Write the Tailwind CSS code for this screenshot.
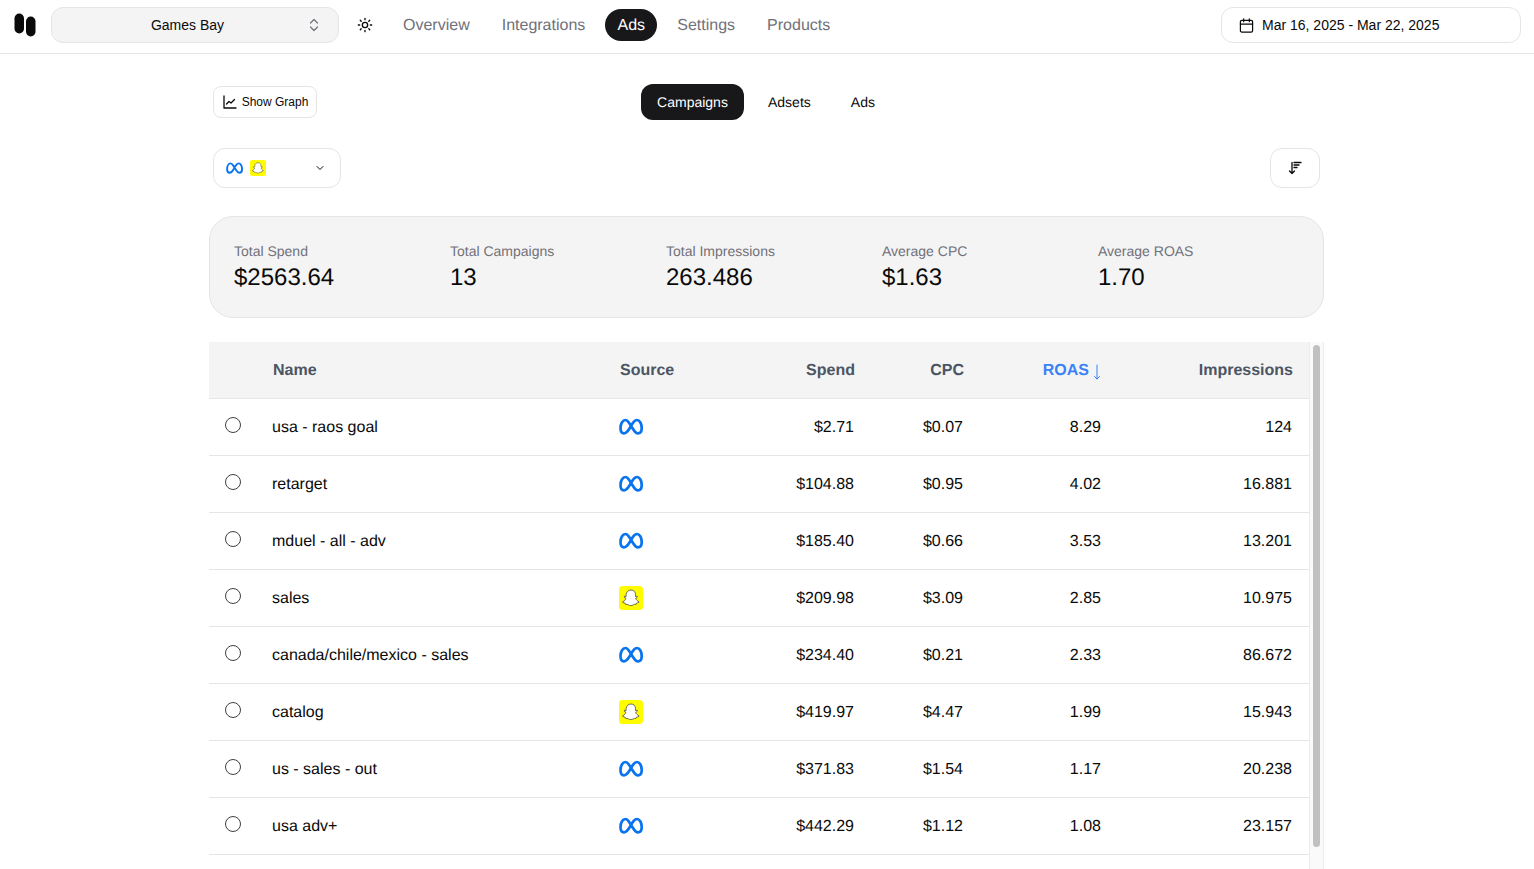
<!DOCTYPE html>
<html lang="en">
<head>
<meta charset="UTF-8">
<title>Ads</title>
<script src="https://cdn.jsdelivr.net/npm/@tailwindcss/browser@4"></script>
</head>
<body class="bg-white h-[869px] overflow-hidden font-['Liberation_Sans',Arial,sans-serif] text-[#0a0a0a] antialiased [text-rendering:geometricPrecision]">
<svg width="0" height="0" class="absolute">
  <defs>
    <symbol id="meta" viewBox="0 0 24 17"><path d="M6.500 2C3.500 2 1.500 6 1.500 10c0 3.500 1.500 5.300 3.500 5.300 2 0 3.500-1.500 5.500-4.800l3-5C15 3.200 16 2 18 2c2.500 0 4.700 3.500 4.700 8 0 3.500-1.400 5.300-3.700 5.300-2 0-3.200-1.300-5-4.300l-3.500-5.500C9 3.200 8 2 6.500 2Z" fill="none" stroke="#0a74ee" stroke-width="2.700" stroke-linejoin="round"/></symbol>
    <symbol id="snap" viewBox="0 0 24 24"><rect width="24" height="24" rx="3.500" fill="#fffc00"/><path d="M12 4c2.800 0 4.500 2 4.500 4.600v1.900l1.600-.3.500.8c-.5.600-1.400.8-1.900 1.100.3 1.500 1.600 3 3.200 3.600l-.1.800c-.7.400-1.600.4-2.300.7l-.4 1.100c-1.100-.1-2.100.1-2.900.6-1.500.9-3.300.9-4.800 0-.8-.5-1.800-.7-2.900-.6l-.4-1.100c-.7-.3-1.600-.3-2.300-.7l-.1-.8c1.600-.6 2.900-2.100 3.200-3.600-.5-.3-1.400-.5-1.900-1.100l.5-.8 1.600.3V8.600C7.500 6 9.200 4 12 4Z" fill="#fff" stroke="#333" stroke-width=".7" stroke-linejoin="round"/></symbol>
  </defs>
</svg>

<header class="h-[54px] border-b border-[#e5e5e5] flex items-center pl-[14px] pr-[13px] pb-[3px]">
  <svg class="w-[22px] h-[24px] mr-[15px]" viewBox="0 0 22 24"><rect x="0.500" y="0.500" width="9.500" height="20" rx="4.750" fill="#0a0a0a"/><rect x="12" y="3.500" width="9.500" height="20" rx="4.750" fill="#0a0a0a"/></svg>
  <button class="w-[288px] h-[36px] rounded-xl bg-[#f4f4f4] border border-[#e5e5e5] flex items-center pr-[17px] text-sm">
    <span class="flex-1 text-center pl-[16px]">Games Bay</span>
    <svg class="w-[14px] h-[16px] text-[#71717a]" viewBox="0 0 14 16" fill="none" stroke="currentColor" stroke-width="1.200" stroke-linecap="round" stroke-linejoin="round"><path d="m3.500 6 3.500-3.500L10.500 6"/><path d="m3.500 10 3.500 3.500 3.500-3.500"/></svg>
  </button>
  <svg class="w-[16px] h-[16px] ml-[18px] mr-[30px]" viewBox="0 0 24 24" fill="none" stroke="#0a0a0a" stroke-width="2" stroke-linecap="round"><circle cx="12" cy="12" r="4"/><path d="M12 2v2M12 20v2M4.900 4.900l1.400 1.400M17.700 17.700l1.400 1.400M2 12h2M20 12h2M6.300 17.700l-1.400 1.400M19.100 4.900l-1.400 1.400"/></svg>
  <nav class="flex items-center text-base text-[#71717a]">
    <a class="mr-[32px] pt-[2px]">Overview</a>
    <a class="mr-[20px] pt-[2px]">Integrations</a>
    <a class="w-[52px] h-[32px] pt-[2px] rounded-full bg-[#18181b] text-white flex items-center justify-center mr-[20px]">Ads</a>
    <a class="mr-[32px] pt-[2px]">Settings</a>
    <a class="pt-[2px]">Products</a>
  </nav>
  <button class="ml-auto w-[300px] h-[36px] rounded-xl border border-[#e5e5e5] flex items-center pl-[17px] gap-[8px] text-sm">
    <svg class="w-[15px] h-[15px]" viewBox="0 0 16 16" fill="none" stroke="#0a0a0a" stroke-width="1.300" stroke-linecap="round"><rect x="1.500" y="2.500" width="13" height="12.500" rx="1.500"/><path d="M1.500 6.500h13M5 1v3M11 1v3"/></svg>
    <span>Mar 16, 2025 - Mar 22, 2025</span>
  </button>
</header>

<main class="w-[1115px] ml-[209px]">
  <div class="relative h-[94px] pl-[4px] pt-[32px]">
    <button class="w-[104px] h-[32px] rounded-lg border border-[#e5e5e5] flex items-center justify-center gap-[5px] text-xs">
      <svg class="w-[14px] h-[14px] ml-px" viewBox="0 0 14 14" fill="none" stroke="#0a0a0a" stroke-width="1.300" stroke-linecap="round" stroke-linejoin="round"><path d="M1 1v12h12"/><path d="m3.500 9 2.500-2.500 2 1.500 3.500-3.500"/></svg>
      Show Graph
    </button>
    <div class="absolute left-[432px] top-[30px] flex items-center text-sm">
      <span class="w-[103px] h-[36px] rounded-xl bg-[#18181b] text-white flex items-center justify-center">Campaigns</span>
      <span class="ml-[24px]">Adsets</span>
      <span class="ml-[40px]">Ads</span>
    </div>
  </div>

  <div class="flex justify-between pl-[4px] pr-[4px]">
    <button class="w-[128px] h-[40px] rounded-xl border border-[#e5e5e5] flex items-center pl-[12px] pr-[14px]">
      <svg class="w-[17px] h-[12px]"><use href="#meta"/></svg>
      <svg class="w-[16px] h-[16px] ml-[7px]"><use href="#snap"/></svg>
      <svg class="w-[12px] h-[12px] ml-auto" viewBox="0 0 12 12" fill="none" stroke="#0a0a0a" stroke-width="1" stroke-linecap="round" stroke-linejoin="round"><path d="m3 4.500 3 3 3-3"/></svg>
    </button>
    <button class="w-[50px] h-[40px] rounded-xl border border-[#e5e5e5] flex items-center justify-center">
      <svg class="w-[14px] h-[14px] mr-px" viewBox="0 0 14 14" fill="none" stroke="#0a0a0a" stroke-width="1.300" stroke-linecap="round" stroke-linejoin="round"><path d="M4 1.500v11M1.500 10 4 12.500 6.500 10"/><path d="M6 1.500h7M6 4h5M6 6.500h3"/></svg>
    </button>
  </div>

  <section class="mt-[28px] h-[102px] rounded-3xl bg-[#f4f4f4] border border-[#e5e5e5] pl-[24px] pt-[26px] grid grid-cols-[216px_216px_216px_216px_216px]">
    <div><p class="text-sm leading-[16px] text-[#71717a]">Total Spend</p><p class="text-2xl leading-[32px] mt-[3px]">$2563.64</p></div>
    <div><p class="text-sm leading-[16px] text-[#71717a]">Total Campaigns</p><p class="text-2xl leading-[32px] mt-[3px]">13</p></div>
    <div><p class="text-sm leading-[16px] text-[#71717a]">Total Impressions</p><p class="text-2xl leading-[32px] mt-[3px]">263.486</p></div>
    <div><p class="text-sm leading-[16px] text-[#71717a]">Average CPC</p><p class="text-2xl leading-[32px] mt-[3px]">$1.63</p></div>
    <div><p class="text-sm leading-[16px] text-[#71717a]">Average ROAS</p><p class="text-2xl leading-[32px] mt-[3px]">1.70</p></div>
  </section>

  <div class="mt-[24px] flex h-[527px] overflow-hidden">
    <table class="w-[1100px] h-fit table-fixed border-collapse text-base [&_td]:pt-[2px] [&_th]:pt-[2px]">
      <colgroup><col class="w-[47px]"><col class="w-[347px]"><col class="w-[130px]"><col class="w-[137px]"><col class="w-[109px]"><col class="w-[138px]"><col class="w-[192px]"></colgroup>
      <thead class="bg-[#f4f4f4] text-[#4b5563]">
        <tr class="h-[56px] border-b border-[#e5e5e5]">
          <th></th>
          <th class="pl-[17px] pr-4 text-left font-bold">Name</th>
          <th class="pl-[17px] pr-4 text-left font-bold">Source</th>
          <th class="pl-4 pr-[15px] text-right font-bold">Spend</th>
          <th class="pl-4 pr-[15px] text-right font-bold">CPC</th>
          <th class="px-4 text-right font-bold text-[#3b82f6]"><span class="inline-flex items-center justify-end gap-[4px]">ROAS <svg class="w-[8px] h-[16px] mt-[2px]" viewBox="0 0 8 16" fill="none" stroke="currentColor" stroke-width="1" stroke-linecap="round" stroke-linejoin="round"><path d="M4 1v14M1.500 12.500 4 15l2.500-2.500"/></svg></span></th>
          <th class="pl-4 pr-[16px] text-right font-bold">Impressions</th>
        </tr>
      </thead>
      <tbody>
        <tr class="h-[57px] border-b border-[#e5e5e5]">
          <td class="pl-[16px]"><span class="block w-4 h-4 rounded-full border border-[#3f3f46] -mt-[6px]"></span></td>
          <td class="px-4">usa - raos goal</td>
          <td class="px-4"><svg class="block w-6 h-[17px] -mt-[2px]"><use href="#meta"/></svg></td>
          <td class="px-4 text-right">$2.71</td><td class="px-4 text-right">$0.07</td><td class="px-4 text-right">8.29</td><td class="pl-4 pr-[17px] text-right">124</td>
        </tr>
        <tr class="h-[57px] border-b border-[#e5e5e5]">
          <td class="pl-[16px]"><span class="block w-4 h-4 rounded-full border border-[#3f3f46] -mt-[6px]"></span></td>
          <td class="px-4">retarget</td>
          <td class="px-4"><svg class="block w-6 h-[17px] -mt-[2px]"><use href="#meta"/></svg></td>
          <td class="px-4 text-right">$104.88</td><td class="px-4 text-right">$0.95</td><td class="px-4 text-right">4.02</td><td class="pl-4 pr-[17px] text-right">16.881</td>
        </tr>
        <tr class="h-[57px] border-b border-[#e5e5e5]">
          <td class="pl-[16px]"><span class="block w-4 h-4 rounded-full border border-[#3f3f46] -mt-[6px]"></span></td>
          <td class="px-4">mduel - all - adv</td>
          <td class="px-4"><svg class="block w-6 h-[17px] -mt-[2px]"><use href="#meta"/></svg></td>
          <td class="px-4 text-right">$185.40</td><td class="px-4 text-right">$0.66</td><td class="px-4 text-right">3.53</td><td class="pl-4 pr-[17px] text-right">13.201</td>
        </tr>
        <tr class="h-[57px] border-b border-[#e5e5e5]">
          <td class="pl-[16px]"><span class="block w-4 h-4 rounded-full border border-[#3f3f46] -mt-[6px]"></span></td>
          <td class="px-4">sales</td>
          <td class="px-4"><svg class="block w-6 h-6 -mt-[2px]"><use href="#snap"/></svg></td>
          <td class="px-4 text-right">$209.98</td><td class="px-4 text-right">$3.09</td><td class="px-4 text-right">2.85</td><td class="pl-4 pr-[17px] text-right">10.975</td>
        </tr>
        <tr class="h-[57px] border-b border-[#e5e5e5]">
          <td class="pl-[16px]"><span class="block w-4 h-4 rounded-full border border-[#3f3f46] -mt-[6px]"></span></td>
          <td class="px-4">canada/chile/mexico - sales</td>
          <td class="px-4"><svg class="block w-6 h-[17px] -mt-[2px]"><use href="#meta"/></svg></td>
          <td class="px-4 text-right">$234.40</td><td class="px-4 text-right">$0.21</td><td class="px-4 text-right">2.33</td><td class="pl-4 pr-[17px] text-right">86.672</td>
        </tr>
        <tr class="h-[57px] border-b border-[#e5e5e5]">
          <td class="pl-[16px]"><span class="block w-4 h-4 rounded-full border border-[#3f3f46] -mt-[6px]"></span></td>
          <td class="px-4">catalog</td>
          <td class="px-4"><svg class="block w-6 h-6 -mt-[2px]"><use href="#snap"/></svg></td>
          <td class="px-4 text-right">$419.97</td><td class="px-4 text-right">$4.47</td><td class="px-4 text-right">1.99</td><td class="pl-4 pr-[17px] text-right">15.943</td>
        </tr>
        <tr class="h-[57px] border-b border-[#e5e5e5]">
          <td class="pl-[16px]"><span class="block w-4 h-4 rounded-full border border-[#3f3f46] -mt-[6px]"></span></td>
          <td class="px-4">us - sales - out</td>
          <td class="px-4"><svg class="block w-6 h-[17px] -mt-[2px]"><use href="#meta"/></svg></td>
          <td class="px-4 text-right">$371.83</td><td class="px-4 text-right">$1.54</td><td class="px-4 text-right">1.17</td><td class="pl-4 pr-[17px] text-right">20.238</td>
        </tr>
        <tr class="h-[57px] border-b border-[#e5e5e5]">
          <td class="pl-[16px]"><span class="block w-4 h-4 rounded-full border border-[#3f3f46] -mt-[6px]"></span></td>
          <td class="px-4">usa adv+</td>
          <td class="px-4"><svg class="block w-6 h-[17px] -mt-[2px]"><use href="#meta"/></svg></td>
          <td class="px-4 text-right">$442.29</td><td class="px-4 text-right">$1.12</td><td class="px-4 text-right">1.08</td><td class="pl-4 pr-[17px] text-right">23.157</td>
        </tr>
      </tbody>
    </table>
    <div class="w-[15px] bg-[#fafafa] border-x border-[#ececec] pt-[3px] px-[3px]">
      <div class="h-[502px] rounded-full bg-[#c1c1c1]"></div>
    </div>
  </div>
</main>
</body>
</html>
